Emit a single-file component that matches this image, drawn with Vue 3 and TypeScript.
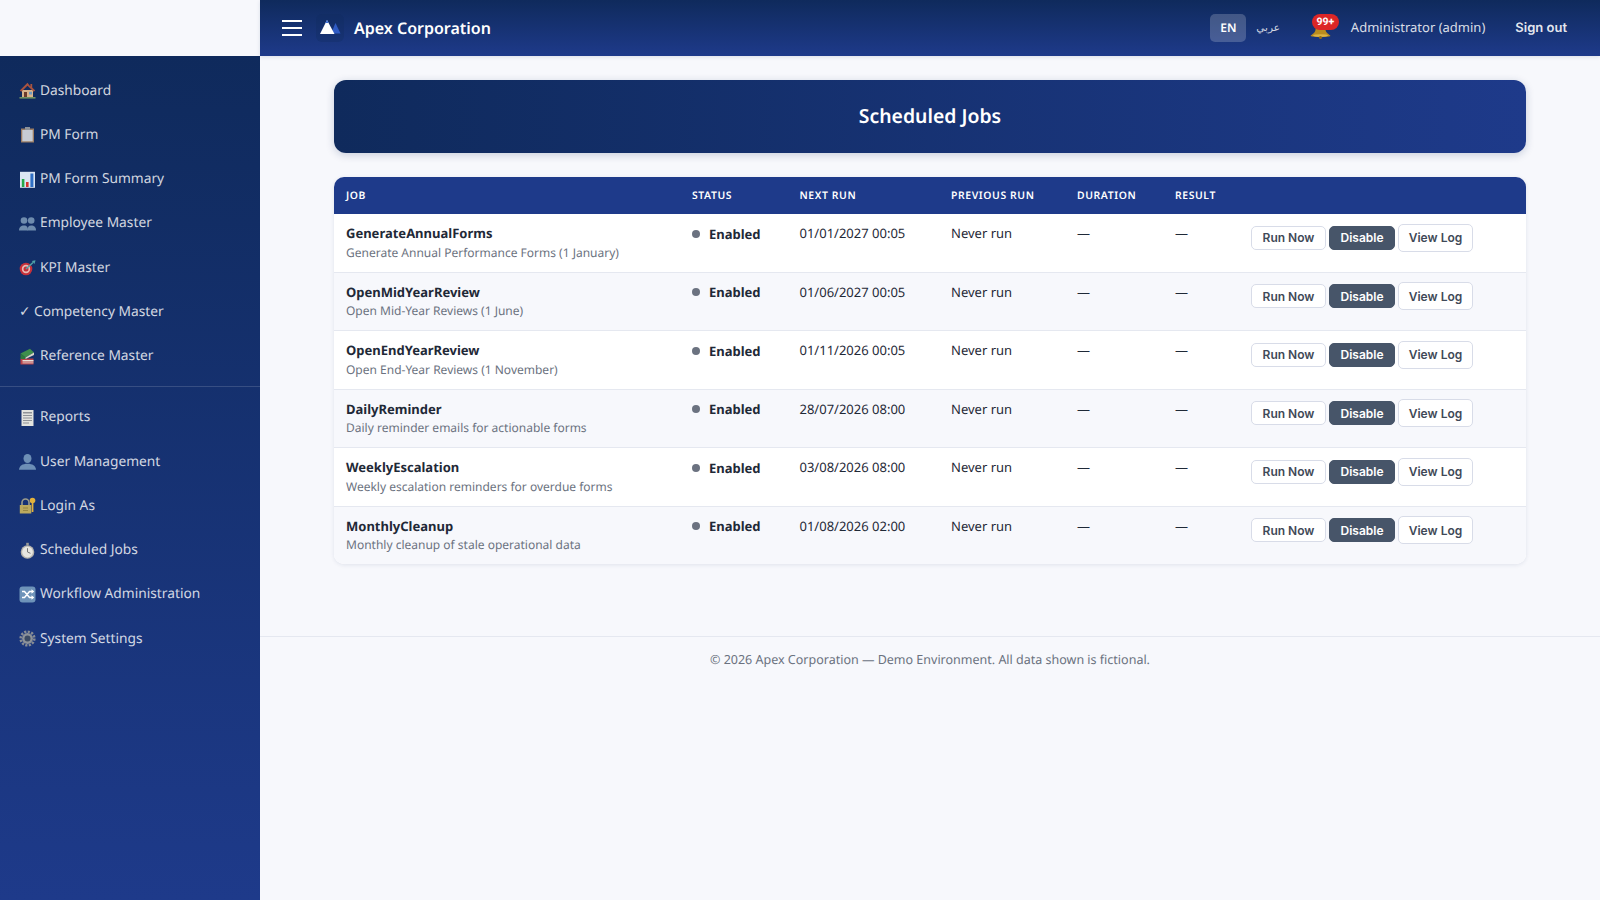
<script setup lang="ts">
interface Job {
  name: string
  desc: string
  next: string
}

// small hand drawn nav icons, 17x17
const icons: Record<string, string> = {
  house: `<path d="M3 8h11v7H3z" fill="#d8b48c"/><path d="M8.500 .8.800 8.500l1.500 1.200L8.500 3.800l6.200 5.900 1.500-1.200-3-2.900V2h-1.800v2.400z" fill="#a9533f"/><path d="M5 10h3v5H5z" fill="#6d3b2b"/><path d="M10 9.800h3v2.700h-3z" fill="#6f9ac0"/><path d="M.5 15h16v1.600H.5z" fill="#6f9160"/>`,
  clipboard: `<path d="M2 2.500h13v14H2z" fill="#9c7d63"/><path d="M3.300 4h10.400v11.300H3.300z" fill="#c7ccd4"/><path d="M6 1h5v3H6z" fill="#8d9199"/>`,
  chart: `<path d="M1 .8h15v16H1z" fill="#dbe6f3"/><path d="M2.800 8h2.600v8H2.800z" fill="#26a84a"/><path d="M7 11h2.600v5H7z" fill="#d2332c"/><path d="M11.400 2.500h3v13.500h-3z" fill="#2f6fc4"/>`,
  people: `<g fill="#6f8cae"><circle cx="5" cy="5.500" r="3.300"/><circle cx="12.200" cy="5.500" r="3.300"/><path d="M0 15.500c0-3.500 2-5 5-5s4 1.500 4 5z"/><path d="M8.500 15.500c0-3.500 1-5 3.700-5 3 0 4.800 1.500 4.800 5z"/></g>`,
  target: `<circle cx="7" cy="10" r="6.300" fill="#c5303a"/><circle cx="7" cy="10" r="4.200" fill="#e8b9b4"/><circle cx="7" cy="10" r="2.500" fill="#c5303a"/><path d="M7 10 14 3.500" stroke="#4fa3a8" stroke-width="1.500"/><path d="M12.800 2l3.700-.7-1 3.700z" fill="#4fa3a8"/>`,
  books: `<path d="M1.500 10.500h13v6h-13z" fill="#b8434a"/><path d="M3.500 12h11v1.500h-11z" fill="#e6e2da"/><path d="M3.500 14.500h11v.8h-11z" fill="#e6e2da"/><path d="M1.500 5.500 11 .8l4 3.700-8.500 5z" fill="#3f8f4c"/><path d="M1.500 5.500l5 4v1.500h-5z" fill="#2f7a3c"/><path d="M6.500 9.500l8.500-5v2.500l-8.500 4z" fill="#d8d5c8"/>`,
  reports: `<path d="M2.500 1h12v16h-12z" fill="#e3e3de"/><path d="M4 3h9v1.500H4zM4 6h9v1H4zM4 8.500h9v1H4zM4 11h9v1H4zM4 13.500h6v1H4z" fill="#8f9296"/>`,
  user: `<g fill="#6d8fb6"><ellipse cx="8.500" cy="5.500" rx="4" ry="4.500"/><path d="M0 16.800c.3-4 3.500-6 8.500-6s8.200 2 8.500 6z"/></g>`,
  lock: `<path d="M3 8V5.500a3.500 3.500 0 0 1 7 0V8" fill="none" stroke="#9c9c8c" stroke-width="1.600"/><path d="M.8 8h11.500v8.500H.8z" fill="#bba95e"/><path d="M4 10.500h5v1H4zM4 13h5v1H4z" fill="#958543"/><circle cx="13.500" cy="3.500" r="2.800" fill="#e3b23c"/><path d="M12.700 5h1.700v10h-1.700z" fill="#e3b23c"/>`,
  stopwatch: `<path d="M7.200 .8h2.600v2.500H7.200z" fill="#9a9a96"/><circle cx="8.500" cy="10" r="6.800" fill="#b5b3ad"/><circle cx="8.500" cy="10" r="5.400" fill="#e7e6e1"/><path d="M8.500 10V6.200" stroke="#777" stroke-width="1"/><path d="M8.500 10l3 1.300" stroke="#777" stroke-width="1"/>`,
  shuffle: `<rect x=".5" y=".5" width="16" height="16" rx="3" fill="#6e93b9"/><path d="M3 5.500h2.500l5 6H13M3 11.500h2.500l5-6H13" fill="none" stroke="#fff" stroke-width="1.500"/><path d="M12.500 3.200l2.800 2.300-2.800 2.300zM12.500 9.200l2.800 2.300-2.800 2.300z" fill="#fff"/>`,
  gear: `<circle cx="8.500" cy="8.500" r="6.800" fill="none" stroke="#878c94" stroke-width="2.600" stroke-dasharray="2.200 1.360"/><circle cx="8.500" cy="8.500" r="5.400" fill="#8d9299"/><circle cx="8.500" cy="8.500" r="3" fill="#3b4a63"/>`,
}

const topLinks = [
  { icon: 'house', label: 'Dashboard' },
  { icon: 'clipboard', label: 'PM Form' },
  { icon: 'chart', label: 'PM Form Summary' },
  { icon: 'people', label: 'Employee Master' },
  { icon: 'target', label: 'KPI Master' },
  { icon: '', label: 'Competency Master' },
  { icon: 'books', label: 'Reference Master' },
]

const adminLinks = [
  { icon: 'reports', label: 'Reports' },
  { icon: 'user', label: 'User Management' },
  { icon: 'lock', label: 'Login As' },
  { icon: 'stopwatch', label: 'Scheduled Jobs' },
  { icon: 'shuffle', label: 'Workflow Administration' },
  { icon: 'gear', label: 'System Settings' },
]

const jobs: Job[] = [
  { name: 'GenerateAnnualForms', desc: 'Generate Annual Performance Forms (1 January)', next: '01/01/2027 00:05' },
  { name: 'OpenMidYearReview', desc: 'Open Mid-Year Reviews (1 June)', next: '01/06/2027 00:05' },
  { name: 'OpenEndYearReview', desc: 'Open End-Year Reviews (1 November)', next: '01/11/2026 00:05' },
  { name: 'DailyReminder', desc: 'Daily reminder emails for actionable forms', next: '28/07/2026 08:00' },
  { name: 'WeeklyEscalation', desc: 'Weekly escalation reminders for overdue forms', next: '03/08/2026 08:00' },
  { name: 'MonthlyCleanup', desc: 'Monthly cleanup of stale operational data', next: '01/08/2026 02:00' },
]
</script>

<template>
  <div class="layout">
    <aside class="side">
      <div class="side-top"></div>
      <nav class="side-nav">
        <div class="nav-group">
          <a v-for="l in topLinks" :key="l.label" class="nav-link">
            <svg v-if="l.icon" class="nav-ico" viewBox="0 0 17 17" v-html="icons[l.icon]"></svg>
            <span v-else class="check">✓</span>
            {{ l.label }}
          </a>
        </div>
        <div class="nav-group second">
          <a v-for="l in adminLinks" :key="l.label" class="nav-link">
            <svg class="nav-ico" viewBox="0 0 17 17" v-html="icons[l.icon]"></svg>
            {{ l.label }}
          </a>
        </div>
      </nav>
    </aside>

    <div class="body">
      <header class="topbar">
        <button class="burger"><span></span><span></span><span></span></button>
        <div class="logo">
          <svg width="28" height="28" viewBox="0 0 28 28">
            <path d="M19.500 9 24.500 19.500H15Z" fill="#2f5bc4" />
            <path d="M11 6 18.500 20H4Z" fill="#fff" />
            <path d="M11 6 12.600 9H9.400Z" fill="#3b6fd8" />
          </svg>
        </div>
        <span class="brand">Apex Corporation</span>
        <div class="top-right">
          <span class="lang active">EN</span>
          <span class="lang">عربي</span>
          <span class="bell">
            <svg width="21" height="18" viewBox="0 0 21 18">
              <path d="M10.500 0C6 0 6 5 5.500 9 5 12 2 13 .5 15c3 1.500 17 1.500 20 0-1.500-2-4.500-3-5-6C15 5 15 0 10.500 0Z" fill="#b98c1e" />
              <ellipse cx="10.500" cy="14.500" rx="7.500" ry="1.300" fill="#dcb444" />
              <circle cx="10.500" cy="16.500" r="1.500" fill="#8f6a18" />
            </svg>
            <b class="badge">99+</b>
          </span>
          <span class="user">Administrator (admin)</span>
          <span class="signout">Sign out</span>
        </div>
      </header>

      <main class="content">
        <div class="banner">Scheduled Jobs</div>
        <div class="table-card">
          <table>
            <colgroup>
              <col class="c-job" /><col class="c-status" /><col class="c-next" /><col class="c-prev" />
              <col class="c-dur" /><col class="c-res" /><col />
            </colgroup>
            <thead>
              <tr>
                <th>Job</th>
                <th>Status</th>
                <th>Next Run</th>
                <th>Previous Run</th>
                <th>Duration</th>
                <th>Result</th>
                <th></th>
              </tr>
            </thead>
            <tbody>
              <tr v-for="j in jobs" :key="j.name">
                <td>
                  <div class="job-name">{{ j.name }}</div>
                  <div class="job-desc">{{ j.desc }}</div>
                </td>
                <td class="status"><i class="dot"></i>Enabled</td>
                <td>{{ j.next }}</td>
                <td>Never run</td>
                <td>—</td>
                <td>—</td>
                <td class="actions">
                  <button class="btn">Run Now</button>
                  <button class="btn dark">Disable</button>
                  <button class="btn tall">View Log</button>
                </td>
              </tr>
            </tbody>
          </table>
        </div>
      </main>

      <footer class="foot">© 2026 Apex Corporation — Demo Environment. All data shown is fictional.</footer>
    </div>
  </div>
</template>

<style>
body {
  margin: 0;
  background: #f7f8fc;
}
</style>

<style scoped>
.layout {
  display: flex;
  min-height: 900px;
  font-family: "Noto Sans", sans-serif;
  color: #1f2937;
  text-rendering: geometricPrecision;
}

.side {
  width: 260px;
  flex-shrink: 0;
  display: flex;
  flex-direction: column;
}

.side-top {
  height: 56px;
  background: #f7f8fc;
  flex-shrink: 0;
}

.side-nav {
  flex: 1;
  padding-top: 12px;
  background: linear-gradient(180deg, #0f2a5c 0%, #1e3a8a 100%);
}

.nav-group.second {
  border-top: 1px solid rgba(255, 255, 255, 0.15);
  margin-top: 8px;
  padding-top: 8px;
}

.nav-link {
  display: flex;
  align-items: center;
  gap: 4px;
  padding: 11.5px 19px 10.5px;
  font-size: 13.75px;
  line-height: 22.25px;
  color: rgba(255, 255, 255, 0.82);
}

.nav-ico {
  width: 17px;
  height: 17px;
  flex-shrink: 0;
}

.check {
  width: 11px;
  flex-shrink: 0;
}

.body {
  flex: 1;
  min-width: 0;
  display: flex;
  flex-direction: column;
}

.topbar {
  height: 56px;
  display: flex;
  align-items: center;
  padding: 0 33px 0 22px;
  background: linear-gradient(180deg, #0f2a5c 0%, #1e3a8a 100%);
  box-shadow: 0 1px 4px rgba(15, 42, 92, 0.12);
  color: #fff;
}

.burger {
  width: 20px;
  padding: 0;
  border: 0;
  background: none;
  display: flex;
  flex-direction: column;
  gap: 5px;
  margin-right: 14px;
}

.burger span {
  display: block;
  height: 2px;
  background: #fff;
}

.logo {
  width: 28px;
  height: 28px;
  border-radius: 6px;
  background: rgba(15, 42, 92, 0.3);
  margin-right: 10px;
}

.logo svg {
  display: block;
}

.brand {
  font-size: 16px;
  font-weight: 600;
  position: relative;
  top: -0.5px;
}

.top-right {
  margin-left: auto;
  display: flex;
  align-items: center;
}

.lang {
  font-size: 10.4px;
  color: rgba(255, 255, 255, 0.8);
  margin-left: 10px;
  height: 28px;
  line-height: 28px;
  border-radius: 5px;
}

.lang.active {
  width: 36px;
  margin-left: 0;
  text-align: center;
  font-size: 12px;
  font-weight: 600;
  color: #fff;
  background: rgba(255, 255, 255, 0.2);
}

.bell {
  position: relative;
  width: 21px;
  height: 18px;
  margin-left: 30px;
  margin-right: 20px;
  top: 2px;
}

.bell svg {
  display: block;
}

.badge {
  position: absolute;
  top: -7px;
  left: 2px;
  font-family: Roboto, sans-serif;
  font-size: 10.5px;
  font-weight: 700;
  line-height: 16px;
  width: 27px;
  text-align: center;
  border-radius: 8px;
  background: #dc2626;
  color: #fff;
}

.user {
  font-size: 13px;
  color: rgba(255, 255, 255, 0.85);
  position: relative;
  top: -1px;
}

.signout {
  font-family: Inter, sans-serif;
  font-size: 13px;
  font-weight: 600;
  margin-left: 30px;
  color: rgba(255, 255, 255, 0.9);
}

.content {
  width: 1192px;
  margin: 0 auto;
  padding: 24px 0 72px;
}

.banner {
  height: 73px;
  padding-bottom: 2px;
  box-sizing: border-box;
  display: flex;
  align-items: center;
  justify-content: center;
  border-radius: 12px;
  background: linear-gradient(90deg, #0f2a5c 0%, #1e3a8a 100%);
  box-shadow: 0 2px 8px rgba(15, 42, 92, 0.2);
  color: #fff;
  font-size: 19.4px;
  font-weight: 600;
}

.table-card {
  margin-top: 24px;
  border-radius: 10px;
  overflow: hidden;
  box-shadow: 0 1px 4px rgba(15, 42, 92, 0.1);
}

table {
  width: 100%;
  border-collapse: collapse;
  table-layout: fixed;
  background: #fff;
  font-size: 13px;
}

.c-job { width: 346px; }
.c-status { width: 107.5px; }
.c-next { width: 151.5px; }
.c-prev { width: 126px; }
.c-dur { width: 98px; }
.c-res { width: 76px; }

th {
  height: 37px;
  padding: 0 12px;
  box-sizing: border-box;
  background: #1e3a8a;
  color: #fff;
  font-size: 10.4px;
  font-weight: 600;
  letter-spacing: 0.6px;
  text-align: left;
  text-transform: uppercase;
}

td {
  padding: 10px 12px;
  vertical-align: top;
  border-bottom: 1px solid #e5e8f0;
  line-height: 19.5px;
}

tbody tr:nth-child(even) {
  background: #f7f8fc;
}

tbody tr:last-child td {
  border-bottom: 0;
}

.job-name {
  font-weight: 700;
  color: #1f2937;
}

.job-desc {
  font-size: 12px;
  line-height: 18px;
  color: #6b7280;
}

.status {
  font-weight: 700;
  padding-top: 10.5px;
}

.dot {
  display: inline-block;
  width: 8px;
  height: 8px;
  border-radius: 50%;
  background: #6b7280;
  margin-right: 9px;
  vertical-align: 1px;
}

.actions {
  padding-top: 9.5px;
  padding-bottom: 0;
  white-space: nowrap;
}

.btn {
  font-family: Inter, sans-serif;
  font-size: 12px;
  font-weight: 600;
  height: 24px;
  width: 75px;
  padding: 0;
  margin-right: 3px;
  border: 1px solid #d8dce8;
  border-radius: 5px;
  background: #fff;
  color: #3f4957;
  vertical-align: middle;
}

.btn.dark {
  width: 66px;
  border-color: #475569;
  background: #475569;
  color: #fff;
}

.btn.tall {
  height: 28px;
}

.foot {
  border-top: 1px solid #e5e8f0;
  padding-top: 14px;
  text-align: center;
  font-size: 12.5px;
  color: #6b7280;
}
</style>
